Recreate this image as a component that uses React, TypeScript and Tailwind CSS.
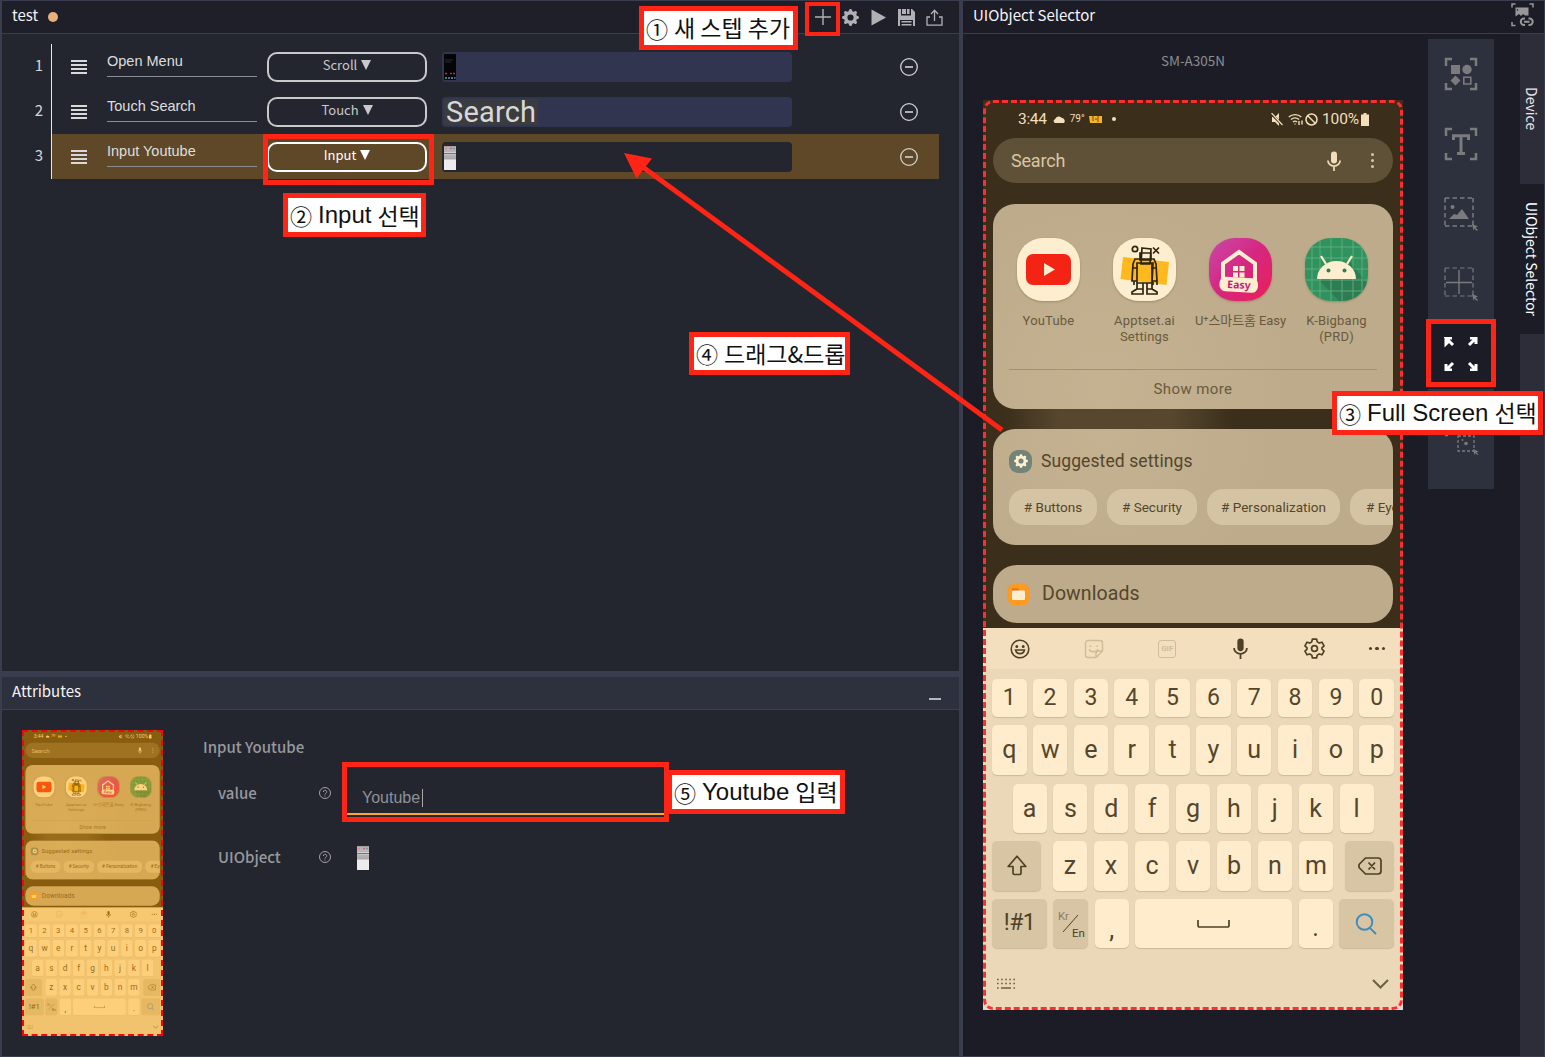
import React from "react";
import type { ReactNode } from "react";
import { BsGearFill } from "react-icons/bs";

const UI = "font-['Noto_Sans_CJK_KR','Noto_Sans',sans-serif]";
const HELV = "font-['Liberation_Sans','Noto_Sans_CJK_KR',sans-serif]";
const ROBOTO = "font-[Roboto,'Noto_Sans_CJK_KR',sans-serif]";

/* ---------- phone screen ---------- */

function Mic({ className }: { className: string }) {
  return (
    <svg viewBox="0 0 14 20" className={className} fill="none" stroke="currentColor" strokeWidth="1.7">
      <rect x="4" y="0.5" width="6" height="12" rx="3" fill="currentColor" stroke="none" />
      <path d="M0.9 9.5a6.1 5.6 0 0 0 12.2 0M7 15v5" />
    </svg>
  );
}

function YouTubeIcon() {
  return (
    <svg viewBox="0 0 63 63" className="h-[63px] w-[63px]">
      <rect width="63" height="63" rx="26" fill="#feeed0" />
      <rect x="9" y="16" width="45" height="31" rx="7" fill="#f42414" />
      <path d="M27 25v13l11-6.5z" fill="#feeed0" />
    </svg>
  );
}

function RobotIcon() {
  return (
    <svg viewBox="0 0 63 63" className="h-[63px] w-[63px]" fill="none" stroke="#2f2410" strokeWidth="1.7">
      <rect width="63" height="63" rx="26" fill="#feeed0" stroke="none" />
      <path d="M10 19l46 5-2.500 23-46-6z" fill="#fdb91d" stroke="none" />
      <circle cx="22" cy="11" r="2.700" />
      <path d="M40 9.500l6 6M46 9.500l-6 6" />
      <path d="M29 10l9 1-1 15h-9zM27 15h11v7H27zM22 21h19l2 5 1 17h-5V25H24v18h-5l1-17zM24 25h16l-1 20H24zM20 30h5M38 30h6M21 43v4M24 44v4M40 44v3M44 43v4M24 45v6l-5 3v2h11V45M34 45v11h10v-2l-5-3v-6M24 51h6M34 51h6" />
    </svg>
  );
}

function HomeEasyIcon() {
  return (
    <svg viewBox="0 0 63 63" className="h-[63px] w-[63px]">
      <defs>
        <linearGradient id="home" x1="0" y1="0" x2="1" y2="1">
          <stop offset="0" stopColor="#c84aa9" />
          <stop offset="0.500" stopColor="#d6267f" />
          <stop offset="1" stopColor="#ea2059" />
        </linearGradient>
      </defs>
      <rect width="63" height="63" rx="26" fill="url(#home)" />
      <path d="M14 43V25.500L30 14l16 11.500V43" fill="none" stroke="#feeed0" strokeWidth="4" />
      <path d="M24 28h5v5h-5zM30.500 28h5v5h-5zM24 34.500h5v5h-5zM30.500 34.500h5v5h-5z" fill="#feeed0" />
      <rect x="10.500" y="39.500" width="38.500" height="14.500" rx="6" fill="#feeed0" transform="rotate(3 30 47)" />
      <text x="30" y="50.500" textAnchor="middle" fontFamily="Noto Sans" fontWeight="700" fontSize="10.500" fill="#c6207c" transform="rotate(3 30 47)">
        Easy
      </text>
    </svg>
  );
}

function AndroidIcon() {
  return (
    <svg viewBox="0 0 63 63" className="h-[63px] w-[63px]">
      <defs>
        <clipPath id="droid">
          <rect width="63" height="63" rx="26" />
        </clipPath>
      </defs>
      <g clipPath="url(#droid)">
        <rect width="63" height="63" fill="#2f925f" />
        <path d="M12 40L34 63H63V46L44 23z" fill="#2d7d54" />
        <path d="M7 0v63M15 0v63M26 0v63M37 0v63M48 0v63M57 0v63M0 9h63M0 20h63M0 31h63M0 42h63M0 53h63" stroke="#6bb284" strokeWidth="0.800" />
        <path d="M12 41a19.500 18 0 0 1 39 0z" fill="#feeed0" />
        <path d="M16 18l5 8M47 18l-5 8" stroke="#feeed0" strokeWidth="2.200" />
        <circle cx="23.500" cy="32.500" r="2" fill="#2f7d50" />
        <circle cx="39.500" cy="32.500" r="2" fill="#2f7d50" />
      </g>
    </svg>
  );
}

const apps: { icon: ReactNode; lines: string[]; narrow?: boolean }[] = [
  { icon: <YouTubeIcon />, lines: ["YouTube"] },
  { icon: <RobotIcon />, lines: ["Apptset.ai", "Settings"] },
  { icon: <HomeEasyIcon />, lines: ["U⁺스마트홈 Easy"], narrow: true },
  { icon: <AndroidIcon />, lines: ["K-Bigbang", "(PRD)"] },
];

function Key({ children, className = "" }: { children?: ReactNode; className?: string }) {
  return (
    <div
      className={`flex h-full shrink-0 items-center justify-center rounded-[5px] shadow-[0_1px_1px_rgba(120,95,50,0.25)] ${className}`}
    >
      {children}
    </div>
  );
}

function Letter({ c, w = "w-[34px]" }: { c: string; w?: string }) {
  return <Key className={`${w} bg-[#feeccd] text-[25px] text-[#54462c]`}>{c}</Key>;
}

function StatusBar() {
  return (
    <div className="flex h-[38px] items-center pr-[34px] pl-[35px] text-[#f3dfbd]">
      <span className="text-[15.500px] leading-4 tracking-[-0.3px]">3:44</span>
      <svg viewBox="0 0 13 8" className="ml-1.5 h-2 w-[13px]" fill="currentColor">
        <path d="M2 8a2 2 0 0 1 0-3.800A4 4 0 0 1 9 3a3 3 0 0 1 2 5z" />
      </svg>
      <span className="ml-1 text-[10px] leading-3">79°</span>
      <svg viewBox="0 0 14 8" className="ml-1 h-2 w-3.5">
        <path d="M0 1h13v7H1z" fill="#f5b32a" />
        <path d="M4 1v5M9 1v6M6 4h2" stroke="#6b4a12" strokeWidth="1" />
      </svg>
      <span className="ml-[9px] h-1 w-1 rounded-full bg-current" />
      <div className="ml-auto flex items-center">
        <svg viewBox="0 0 12 13" className="h-[13px] w-3" fill="currentColor">
          <path d="M1 4h3l4-4v13L4 9H1z" />
          <path d="M0 0.500l12 12" stroke="#3b2e1a" strokeWidth="2.500" />
          <path d="M0.500 0l11 12" stroke="currentColor" strokeWidth="1.200" />
        </svg>
        <svg viewBox="0 0 16 14" className="ml-[5px] h-3.5 w-4" fill="none" stroke="currentColor" strokeWidth="1.400">
          <path d="M0.800 5a9.500 9.500 0 0 1 12.500 0M3 7.500a6.200 6.200 0 0 1 8 0M5 10a3 3 0 0 1 4 0M7 11.500v1M11 9v4M14 8.500v4" />
        </svg>
        <svg viewBox="0 0 13 13" className="ml-px h-[13px] w-[13px]" fill="none" stroke="currentColor" strokeWidth="1.500">
          <circle cx="6.500" cy="6.500" r="5.500" />
          <path d="M2.500 2.500l8 8" />
        </svg>
        <span className="ml-1 text-[15.500px] leading-4 tracking-[-0.1px]">100%</span>
        <svg viewBox="0 0 8 13" className="ml-0.5 h-[13px] w-2" fill="currentColor">
          <path d="M2.500 0h3v1.500H8V13H0V1.500h2.500z" />
        </svg>
      </div>
    </div>
  );
}

function Keyboard() {
  return (
    <div className="mt-[5px] flex h-[382px] flex-col overflow-hidden rounded-b-[10px] bg-[#ead8b8] text-[#4f4128]">
      <div className="flex h-[41px] shrink-0 items-center bg-[#f3dfbd]">
        <div className="flex w-[73.7px] justify-center">
          <svg viewBox="0 0 20 20" className="h-5 w-5" fill="none" stroke="currentColor" strokeWidth="1.600">
            <circle cx="10" cy="10" r="8.800" />
            <path d="M5.500 11a4.600 4.600 0 0 0 9 0z" />
            <circle cx="6.800" cy="7.500" r="0.700" fill="currentColor" />
            <circle cx="13.200" cy="7.500" r="0.700" fill="currentColor" />
          </svg>
        </div>
        <div className="flex w-[73.7px] justify-center text-[#d0bd98]">
          <svg viewBox="0 0 20 20" className="h-5 w-5" fill="none" stroke="currentColor" strokeWidth="1.500">
            <path d="M4 1.500h12a2.500 2.500 0 0 1 2.500 2.500v8l-6.500 6.500H4A2.500 2.500 0 0 1 1.500 16V4A2.500 2.500 0 0 1 4 1.500zM18 12h-3.500a2.500 2.500 0 0 0-2.500 2.500V18M5 10.500a5 4 0 0 0 9 0M6.500 6.500v1.500M13 6.500v1.500" />
          </svg>
        </div>
        <div className="flex w-[73.7px] justify-center text-[#d0bd98]">
          <span className="flex h-[18px] w-[18px] items-center justify-center rounded-[3px] border-[1.5px] border-current text-[8px] leading-none font-bold">
            GIF
          </span>
        </div>
        <div className="flex w-[73.7px] justify-center">
          <Mic className="h-[21px] w-[15px]" />
        </div>
        <div className="flex w-[73.7px] justify-center">
          <svg viewBox="0 0 20 20" className="h-[21px] w-[21px]" fill="none" stroke="currentColor" strokeWidth="1.600" strokeLinejoin="round">
            <circle cx="10" cy="10" r="2.800" />
            <path d="M8 1h4l.6 2.700 1.900 1.100 2.600-.8 2 3.500-2 1.800v1.400l2 1.800-2 3.500-2.600-.8-1.900 1.100L12 19H8l-.6-2.700-1.900-1.100-2.600.8-2-3.500 2-1.800V9.300l-2-1.800 2-3.500 2.600.8 1.900-1.100z" />
          </svg>
        </div>
        <div className="flex w-[51.5px] justify-center gap-[3px]">
          <span className="h-[3.500px] w-[3.500px] rounded-full bg-current" />
          <span className="h-[3.500px] w-[3.500px] rounded-full bg-current" />
          <span className="h-[3.500px] w-[3.500px] rounded-full bg-current" />
        </div>
      </div>
      <div className="mt-[9.5px] flex h-[38.5px] shrink-0 justify-between px-[9px]">
        {[..."1234567890"].map((c) => (
          <Key key={c} className="w-[34.5px] bg-[#feeccd] text-[23px] text-[#54462c]">
            {c}
          </Key>
        ))}
      </div>
      <div className="mt-2 flex h-[50px] shrink-0 justify-between px-[9px]">
        {[..."qwertyuiop"].map((c) => (
          <Letter key={c} c={c} w="w-[34.5px]" />
        ))}
      </div>
      <div className="mt-[8.5px] flex h-[49.5px] shrink-0 justify-between px-[29.5px]">
        {[..."asdfghjkl"].map((c) => (
          <Letter key={c} c={c} />
        ))}
      </div>
      <div className="mt-2 flex h-[49.500px] shrink-0 justify-between px-[9px]">
        <Key className="w-[49px] bg-[#d7c5a4]">
          <svg viewBox="0 0 20 21" className="h-[21px] w-5" fill="none" stroke="currentColor" strokeWidth="1.700" strokeLinejoin="round">
            <path d="M10 1.200L1.200 11.500H6V18a1.500 1.500 0 0 0 1.500 1.500h5A1.500 1.500 0 0 0 14 18v-6.500h4.800z" />
          </svg>
        </Key>
        <div className="flex h-full w-[280px] justify-between">
          {[..."zxcvbnm"].map((c) => (
            <Letter key={c} c={c} />
          ))}
        </div>
        <Key className="w-[49px] bg-[#d7c5a4]">
          <svg viewBox="0 0 24 18" className="h-[18px] w-6" fill="none" stroke="currentColor" strokeWidth="1.700" strokeLinejoin="round">
            <path d="M7.500 1H20a3 3 0 0 1 3 3v10a3 3 0 0 1-3 3H7.500L1 10.500V7.500zM10.500 5.500l6.500 7M17 5.500l-6.500 7" />
          </svg>
        </Key>
      </div>
      <div className="mt-[8.500px] flex h-[49px] shrink-0 justify-between px-[9px]">
        <Key className="w-[55px] bg-[#d7c5a4] text-[23px] tracking-[-0.5px]">!#1</Key>
        <Key className="w-[35px] bg-[#d7c5a4]">
          <div className="relative h-7 w-[26px] text-[11.500px] leading-3">
            <span className="absolute top-0 left-0 text-[#8e7e60]">Kr</span>
            <span className="absolute right-[-1px] bottom-[-1px]">En</span>
            <svg viewBox="0 0 26 28" className="h-7 w-[26px]" stroke="currentColor" strokeWidth="1">
              <path d="M5 22L20 5" />
            </svg>
          </div>
        </Key>
        <Key className="w-[34px] bg-[#feeccd] pt-3 text-[25px]">,</Key>
        <Key className="w-[157px] bg-[#feeccd]">
          <svg viewBox="0 0 33 8" className="h-2 w-[33px]" fill="none" stroke="currentColor" strokeWidth="1.700">
            <path d="M1 0v5.500a1.500 1.500 0 0 0 1.500 1.500h28A1.500 1.500 0 0 0 32 5.500V0" />
          </svg>
        </Key>
        <Key className="w-[34px] bg-[#feeccd] pt-2 text-[25px]">.</Key>
        <Key className="w-[55px] bg-[#d7c5a4]">
          <svg viewBox="0 0 22 22" className="h-[22px] w-[22px]" fill="none" stroke="#3c8cc0" strokeWidth="1.900">
            <circle cx="9.500" cy="9" r="7.800" />
            <path d="M14.800 14.800L21 21" />
          </svg>
        </Key>
      </div>
      <div className="mt-[30px] flex items-center justify-between pr-[14px] pl-[13px] text-[#6d5f42]">
        <svg viewBox="0 0 20 12" className="h-3 w-5" stroke="currentColor" strokeWidth="1.600">
          <path d="M1 1.500h18M1 5.500h18" strokeDasharray="1.600 2.500" />
          <path d="M1 10h1.600M5 10h10M17.400 10h1.600" />
        </svg>
        <svg viewBox="0 0 17 10" className="h-2.5 w-[17px]" fill="none" stroke="currentColor" strokeWidth="2">
          <path d="M1 1l7.500 7.500L16 1" />
        </svg>
      </div>
    </div>
  );
}

function PhoneScreen() {
  return (
    <div
      className={`flex h-[910px] w-[420px] flex-col bg-[#dddadb] bg-[linear-gradient(#3b2e1a,#3b2e1a)] bg-[length:100%_880px] bg-no-repeat ${ROBOTO}`}
    >
      <StatusBar />
      <div className="mx-2.5 flex h-[45px] shrink-0 items-center rounded-full bg-[#5f5038] pr-[19px] pl-[18px] text-[#d9c6a3]">
        <span className="text-[18px] leading-5 tracking-[-0.2px]">Search</span>
        <span className="ml-auto text-[#f0dcb9]">
          <Mic className="h-5 w-3.5" />
        </span>
        <span className="ml-[30px] flex flex-col gap-[3px]">
          <span className="h-[3px] w-[3px] rounded-full bg-current" />
          <span className="h-[3px] w-[3px] rounded-full bg-current" />
          <span className="h-[3px] w-[3px] rounded-full bg-current" />
        </span>
      </div>
      <div className="mx-2.5 mt-[21px] flex h-[205px] shrink-0 flex-col rounded-[22px] bg-[#bdab8b] bg-[radial-gradient(circle_at_28%_90%,#c4b291,#bdab8b_55%)] pt-[34px] text-[#695a3d]">
        <div className="flex h-[131px] shrink-0 pl-[7.500px]">
          {apps.map((a) => (
            <div key={a.lines[0]} className="flex w-24 shrink-0 flex-col items-center">
              <div className="rounded-[26px] shadow-[0_1px_2px_rgba(80,60,20,0.3)]">{a.icon}</div>
              <div className={`mt-[12px] text-center text-[13px] leading-4 whitespace-nowrap ${a.narrow ? "tracking-[-0.1px]" : "tracking-[0.2px]"}`}>
                {a.lines.map((l) => (
                  <div key={l} className="h-4">{l}</div>
                ))}
              </div>
            </div>
          ))}
        </div>
        <div className="mx-4 flex h-[39px] items-center justify-center border-t border-[#a39172] text-[15px] tracking-[0.4px]">
          Show more
        </div>
      </div>
      <div className="h-5 shrink-0 bg-[linear-gradient(90deg,transparent_5%,#56472e_18%,#56472e_45%,transparent_60%)]" />
      <div className="mx-2.5 flex h-[116px] shrink-0 flex-col overflow-hidden rounded-[22px] bg-[#bdab8b] bg-[radial-gradient(circle_at_28%_0%,#c4b291,#bdab8b_55%)] pl-4 text-[#54462b]">
        <div className="mt-5 flex h-6 items-center">
          <span className="flex h-[23px] w-[23px] items-center justify-center rounded-[9px] bg-[#748377] text-[#feeed0]">
            <BsGearFill className="h-3.5 w-3.5" />
          </span>
          <span className="ml-[9px] text-[17.500px] tracking-[0.1px]">Suggested settings</span>
        </div>
        <div className="mt-4 flex h-9 gap-2.5 text-[13.500px]">
          <span className="flex w-[88px] shrink-0 items-center justify-center rounded-2xl bg-[#d5c4a3]"># Buttons</span>
          <span className="flex w-[90px] shrink-0 items-center justify-center rounded-2xl bg-[#d5c4a3]"># Security</span>
          <span className="flex w-[133px] shrink-0 items-center justify-center rounded-2xl bg-[#d5c4a3]"># Personalization</span>
          <span className="flex w-[110px] shrink-0 items-center rounded-2xl bg-[#d5c4a3] pl-4"># Eye comfort</span>
        </div>
      </div>
      <div className="mx-2.5 mt-5 flex h-[58px] shrink-0 items-center rounded-[24px] bg-[#bdab8b] pl-[14px] text-[#54462b]">
        <svg viewBox="0 0 23 23" className="h-[23px] w-[23px]">
          <rect width="23" height="23" rx="9" fill="#fd9a22" />
          <path d="M5 5.500h6l1.500 2V12H5z" fill="#d9711e" />
          <rect x="5" y="7.500" width="13" height="9.500" rx="1" fill="#feeed0" />
        </svg>
        <span className="ml-3 text-[19.500px] tracking-[0.1px]">Downloads</span>
      </div>
      <Keyboard />
    </div>
  );
}

/* ---------- small screen captures ---------- */

function MenuCapture() {
  return (
    <svg viewBox="0 0 12 26" className="h-[26px] w-3">
      <rect width="12" height="26" fill="#050507" />
      <path d="M1 6h8M1 8h6" stroke="#2a2a2c" />
      <path d="M1 19.500h2M6 19.500h2M9 19.500h2" stroke="#a33c4a" strokeWidth="1.500" />
      <path d="M1 24h2M7 24h2" stroke="#268e72" strokeWidth="2" />
      <path d="M4 24h2M10 24h1.500" stroke="#5b5d9e" strokeWidth="2" />
    </svg>
  );
}

function SearchResultCapture() {
  return (
    <svg viewBox="0 0 12 26" className="h-[26px] w-3">
      <rect width="12" height="26" fill="#ececee" />
      <rect width="12" height="2.500" fill="#2b2728" />
      <rect y="2.500" width="12" height="6" fill="#b9b5b7" />
      <path d="M1 4.500h2" stroke="#e38a86" strokeWidth="1.500" />
      <path d="M6 4.500h2" stroke="#cf5aa5" strokeWidth="1.500" />
      <path d="M9 4.500h2" stroke="#62a58b" strokeWidth="1.500" />
      <path d="M0 9.500h12M0 13h12" stroke="#77747a" strokeWidth="1" />
      <path d="M0 11.300h12" stroke="#b5b2b5" strokeWidth="2" />
      <rect y="13.500" width="12" height="2" fill="#aaa8ab" />
    </svg>
  );
}

/* ---------- step editor ---------- */

function StepRow({
  name,
  action,
  active,
  children,
}: {
  name: string;
  action: string;
  active?: boolean;
  children: ReactNode;
}) {
  return (
    <div className={`flex h-[45px] w-[887px] items-start ${active ? "bg-[#5f4827]" : ""}`}>
      <div className="mt-4 ml-[19px] flex w-4 flex-col gap-0.5">
        <span className="h-0.5 bg-[#d9d9db]" />
        <span className="h-0.5 bg-[#d9d9db]" />
        <span className="h-0.5 bg-[#d9d9db]" />
        <span className="h-0.5 bg-[#d9d9db]" />
      </div>
      <div className={`ml-5 h-[33px] w-[150px] border-b border-[#8a8c93] pt-2 text-[14.500px] leading-[19px] text-[#dededf] ${HELV}`}>
        {name}
      </div>
      <button
        type="button"
        className={`mt-2 ml-2.5 flex h-[30px] w-40 items-center justify-center gap-1 rounded-[10px] border-[2.500px] pb-1 text-[13px] leading-4 ${
          active ? "border-white text-white" : "border-[#c9c9cb] text-[#c9c9cb]"
        }`}
      >
        {action}
        <svg viewBox="0 0 10 10" className="h-2.5 w-2.5" fill="currentColor">
          <path d="M0 0h10L5 10z" />
        </svg>
      </button>
      <div className={`mt-2 ml-[15px] flex h-[30px] w-[350px] items-center rounded-[4px] pl-0.5 ${active ? "bg-[#23262f]" : "bg-[#32354f]"}`}>
        {children}
      </div>
      <svg viewBox="0 0 18 18" className="mt-3.5 ml-[108px] h-[18px] w-[18px]" fill="none" stroke="#d3d3d5" strokeWidth="1.300">
        <circle cx="9" cy="9" r="8.300" />
        <path d="M5 9h8" strokeWidth="1.600" />
      </svg>
    </div>
  );
}

function StepPanel() {
  return (
    <section className="flex h-[670px] flex-col bg-[#23262f]">
      <header className="flex h-[33px] shrink-0 items-center border-b border-[#3a3d4b] bg-[#1f1f29] pr-4 pl-2.5">
        <span className="pb-1 text-[15px] leading-5 text-[#f3f3f4]">test</span>
        <span className="ml-2.5 h-2.5 w-2.5 rounded-full bg-[#e9b07c]" />
        <div className="ml-auto flex items-center gap-[11px] text-[#b1b1b5]">
          <svg viewBox="0 0 16 16" className="h-4 w-4" stroke="currentColor" strokeWidth="1.400">
            <path d="M8 0v16M0 8h16" />
          </svg>
          <BsGearFill className="h-[17px] w-[17px]" />
          <svg viewBox="0 0 17 17" className="h-[17px] w-[17px]" fill="currentColor">
            <path d="M1.500 0.500v16l14.500-8z" />
          </svg>
          <svg viewBox="0 0 17 17" className="h-[17px] w-[17px]" fill="currentColor">
            <path fillRule="evenodd" d="M0 0h3v6.500h10V0h1l3 3v14h-2v-6H2v6H0zM9 0h2.500v5H9zM4 0h4v5H4z" />
            <path d="M3.500 12h10v1.500h-10zM3.500 15h10v1.500h-10z" />
          </svg>
          <svg viewBox="0 0 17 17" className="h-[17px] w-[17px]" fill="none" stroke="currentColor" strokeWidth="1.300">
            <path d="M4 8H1v8.200h15V8h-3M8.500 12V1.500M5 5l3.500-3.700L12 5" />
          </svg>
        </div>
      </header>
      <div className="mt-2.5 flex">
        <div className="flex w-[49px] flex-col text-[15px] text-[#d6d6d8]">
          {["1", "2", "3"].map((n) => (
            <span key={n} className="flex h-[45px] items-center justify-end pr-2 pb-[3px] leading-5">
              {n}
            </span>
          ))}
        </div>
        <div className="flex flex-col border-l border-[#e6e6e8]">
          <StepRow name="Open Menu" action="Scroll">
            <MenuCapture />
          </StepRow>
          <StepRow name="Touch Search" action="Touch">
            <span className={`flex h-[26px] items-center bg-[#3b3c40] px-0.5 text-[29px] leading-none tracking-[0.2px] text-[#d8d8d8] ${ROBOTO}`}>
              Search
            </span>
          </StepRow>
          <StepRow name="Input Youtube" action="Input" active>
            <SearchResultCapture />
          </StepRow>
        </div>
      </div>
    </section>
  );
}

function HelpIcon() {
  return (
    <svg viewBox="0 0 12 12" className="h-3 w-3" fill="none" stroke="#a0a0a4" strokeWidth="1">
      <circle cx="6" cy="6" r="5.500" />
      <path d="M4.300 5a1.700 1.700 0 1 1 2.600 1.300C6.200 6.700 6 6.900 6 7.500M6 8.500v1" />
    </svg>
  );
}

function AttributesPanel() {
  return (
    <section className="mt-1.5 flex grow flex-col bg-[#23262f]">
      <header className="flex h-[33px] shrink-0 justify-between border-b border-[#3d4050] bg-[#2d303d] pr-[18px] pl-2.5">
        <span className="mt-[4px] text-[15px] leading-5 text-[#f5f5f6]">Attributes</span>
        <span className="mt-[21px] h-0.5 w-3 bg-[#b6b6ba]" />
      </header>
      <div className="flex pt-5 pl-5">
        <div className="relative h-[306px] w-[141px] shrink-0 overflow-hidden">
          <div className="h-[910px] w-[420px] origin-top-left scale-[0.336]">
            <PhoneScreen />
          </div>
          <div className="absolute inset-0 border-2 border-dashed border-[#ff0012] bg-[#ffa500]/40" />
        </div>
        <div className="ml-10 flex flex-col text-[15px] font-medium text-[#98989c]">
          <span className="mt-[7px] leading-5">Input Youtube</span>
          <div className="mt-[9px] ml-[15px] flex h-[49px] items-center">
            <span className="w-[101px] pt-1 leading-5">value</span>
            <span className="pt-1">
              <HelpIcon />
            </span>
            <div className={`mt-0.5 ml-4 flex h-[47px] w-[317px] items-center border-b-2 border-[#fba92a] pt-3.5 pl-[15px] text-base leading-[18px] font-normal text-[#8f9196] ${HELV}`}>
              Youtube
              <span className="ml-0.5 h-[18px] w-px bg-[#a8a8ac]" />
            </div>
          </div>
          <div className="mt-[26px] ml-[15px] flex h-8 items-center">
            <span className="w-[101px] leading-5">UIObject</span>
            <HelpIcon />
            <span className="ml-[26px]">
              <SearchResultCapture />
            </span>
          </div>
        </div>
      </div>
    </section>
  );
}

/* ---------- selector tools ---------- */

const cornerPath = "M2 9V2h6M26 2h6v7M32 26v6h-6M8 32H2v-6";

function Tool({ children, active }: { children: ReactNode; active?: boolean }) {
  return (
    <button type="button" className={`flex h-[70px] w-full items-center justify-center ${active ? "bg-[#1c1c26]" : ""}`}>
      <svg viewBox="0 0 34 34" className="h-[34px] w-[34px]" fill="none" stroke={active ? "#ffffff" : "#7b7b7d"} strokeWidth="2.500">
        {children}
      </svg>
    </button>
  );
}

function Toolbar() {
  return (
    <div className="mt-[5px] ml-[25px] flex h-[450px] w-[66px] shrink-0 flex-col bg-[#2d313d]">
      <Tool>
        <path d={cornerPath} />
        <path d="M7 8h9v9H7zM11.500 18.500l5 5-5 5-5-5z" fill="#7b7b7d" stroke="none" />
        <circle cx="23" cy="12.500" r="4.700" fill="#7b7b7d" stroke="none" />
        <path d="M19.800 20.300h7v6.700h-7z" strokeWidth="1.600" />
      </Tool>
      <Tool>
        <path d={cornerPath} />
        <path d="M9.500 13V8.800h15V13M17 9v17.500M13 26.500h8" strokeWidth="3" />
      </Tool>
      <Tool>
        <path d="M1 1h28M1 29h28" strokeWidth="1.500" strokeDasharray="4.500 3" />
        <path d="M1 1v28M29 1v28" strokeWidth="1.500" strokeDasharray="4.500 3" />
        <path d="M5 22l5-5 3 1 5-6 7 10z" fill="#7b7b7d" stroke="none" />
        <circle cx="8.500" cy="10" r="2" fill="#7b7b7d" stroke="none" />
        <path d="M28 27l6 2.500-2.500 1 2.500 2.500-1 1-2.500-2.500-1 2z" fill="#7b7b7d" stroke="none" />
      </Tool>
      <Tool>
        <path d="M1 1h28M1 29h28" strokeWidth="1.200" strokeDasharray="4.500 3" />
        <path d="M1 1v28M29 1v28" strokeWidth="1.200" strokeDasharray="4.500 3" />
        <path d="M15 3v24M2 15.500h26" strokeWidth="1.400" />
        <path d="M28 27l6 2.500-2.500 1 2.500 2.500-1 1-2.500-2.500-1 2z" fill="#7b7b7d" stroke="none" />
      </Tool>
      <Tool active>
        <g fill="#fff" strokeWidth="3">
          <path d="M2 1v6l2-2M8 1H2l2 2M3 2l6 6" fill="none" />
          <path d="M26 1h6v6M31 2l-6 6" fill="none" />
          <path d="M2 27v6h6M3 32l6-6" fill="none" />
          <path d="M26 33h6v-6M31 32l-6-6" fill="none" />
        </g>
      </Tool>
      <Tool>
        <path d="M1 28.500h3" strokeWidth="1.500" />
      </Tool>
      <div className="-mt-6 flex justify-end pr-[15px]">
        <svg viewBox="0 0 22 20" className="h-5 w-[22px]" fill="none" stroke="#7b7b7d">
          <path d="M1 1h16v15H1z" strokeWidth="1.300" strokeDasharray="3 2" />
          <circle cx="9" cy="8.500" r="1.800" fill="#7b7b7d" stroke="none" />
          <circle cx="5.500" cy="5" r="0.900" fill="#7b7b7d" stroke="none" />
          <path d="M16 14l5.500 2.500-2 1 2 2-1 .5-2-2-1 2z" fill="#7b7b7d" stroke="none" />
        </svg>
      </div>
    </div>
  );
}

function SelectorPanel() {
  return (
    <section className="flex h-[1055px] w-[581px] flex-col bg-[#1c1c26]">
      <header className="flex h-[33px] shrink-0 justify-between border-b border-[#3a3d4b] pr-2.5 pl-2.5">
        <span className="mt-[4px] text-[15px] leading-5 text-[#f5f5f6]">UIObject Selector</span>
        <svg viewBox="0 0 23 24" className="mt-0.5 h-6 w-[23px]" fill="none" stroke="#98989a" strokeWidth="1.500">
          <path d="M1 4.500V1h3.500M18.500 1H22v3.500M1 19v3.500h3.500" />
          <path d="M4.500 4.500h13v8H14l-2-1.500-2 2-2-2-3.500 2.500z" fill="#98989a" stroke="none" />
          <circle cx="6.500" cy="7" r="0.800" fill="#1c1c26" stroke="none" />
          <path d="M14 15.500h-1a3.200 3.200 0 0 0 0 6.400h1M17.500 15.500h1a3.200 3.200 0 0 1 0 6.400h-1M13 18.700h5.500" strokeWidth="2" />
        </svg>
      </header>
      <div className="flex grow">
        <div className="ml-5 flex w-[420px] shrink-0 flex-col">
          <div className="flex h-[66px] justify-center pt-[16px] text-[13.500px] leading-5 text-[#8c8c90]">SM-A305N</div>
          <div className="relative h-[910px]">
            <PhoneScreen />
            <div className="absolute inset-0 rounded-[10px] border-[3px] border-dashed border-[#ff2d2f]" />
          </div>
        </div>
        <Toolbar />
        <div className="ml-auto flex w-[24px] flex-col text-[14px] leading-[24px] text-[#e8e8ea]">
          <div className="flex h-[150px] w-6 items-center justify-center bg-[#2c2d39] [writing-mode:vertical-rl]">Device</div>
          <div className="flex h-[150px] w-6 items-center justify-center whitespace-nowrap text-white [writing-mode:vertical-rl]">
            UIObject Selector
          </div>
          <div className="grow bg-[#2c2d39]" />
        </div>
      </div>
    </section>
  );
}

/* ---------- guide annotations ---------- */

function Callout({ place, mark, latin, korean }: { place: string; mark: string; latin?: string; korean: string }) {
  return (
    <div className={`absolute flex items-center border-[5px] border-[#ff2516] bg-white pl-0.5 whitespace-nowrap text-[#111] ${place}`}>
      <span className="text-[22px] leading-none font-['Noto_Sans_CJK_KR',sans-serif]">{mark}</span>
      {latin && <span className="ml-1.5 text-[24px] leading-none font-['Liberation_Sans',sans-serif]">{latin}</span>}
      <span className="ml-1.5 text-[23px] leading-none font-['Noto_Sans_CJK_KR',sans-serif]">{korean}</span>
    </div>
  );
}

function Annotations() {
  return (
    <>
      <div className="absolute top-[134px] left-[262.500px] h-[50.500px] w-[171.500px] border-[5px] border-[#ff2516]" />
      <div className="absolute top-0.5 left-[805px] h-[33.500px] w-[35px] border-[4.500px] border-[#ff2516]" />
      <div className="absolute top-[319px] left-[1425.500px] h-[67.500px] w-[70px] border-[5px] border-[#ff2516]" />
      <div className="absolute top-[762px] left-[342px] h-[60px] w-[327px] border-[5px] border-[#ff2516]" />
      <svg viewBox="0 0 1545 1057" className="pointer-events-none absolute inset-0 h-[1057px] w-[1545px]">
        <path d="M1002 430L640 165" stroke="#ff2516" strokeWidth="5" />
        <path d="M624 153l28 5.500-15.500 20z" fill="#ff2516" />
      </svg>
      <Callout place="top-[6px] left-[639px] h-[43.500px] w-[159px]" mark="①" korean="새 스텝 추가" />
      <Callout place="top-[193px] left-[283px] h-[44px] w-[143px]" mark="②" latin="Input" korean="선택" />
      <Callout place="top-[391px] left-[1332px] h-[43.500px] w-[211px]" mark="③" latin="Full Screen" korean="선택" />
      <Callout place="top-[331.500px] left-[689px] h-[43.500px] w-[161px]" mark="④" korean="드래그&드롭" />
      <Callout place="top-[770px] left-[667px] h-[43.500px] w-[177.500px]" mark="⑤" latin="Youtube" korean="입력" />
    </>
  );
}

export default function App() {
  return (
    <div className={`relative flex h-[1057px] w-[1545px] gap-1 overflow-hidden bg-[#3a3d4e] pt-px pb-px pl-0.5 ${UI}`}>
      <div className="flex w-[957px] shrink-0 flex-col">
        <StepPanel />
        <AttributesPanel />
      </div>
      <SelectorPanel />
      <Annotations />
    </div>
  );
}
